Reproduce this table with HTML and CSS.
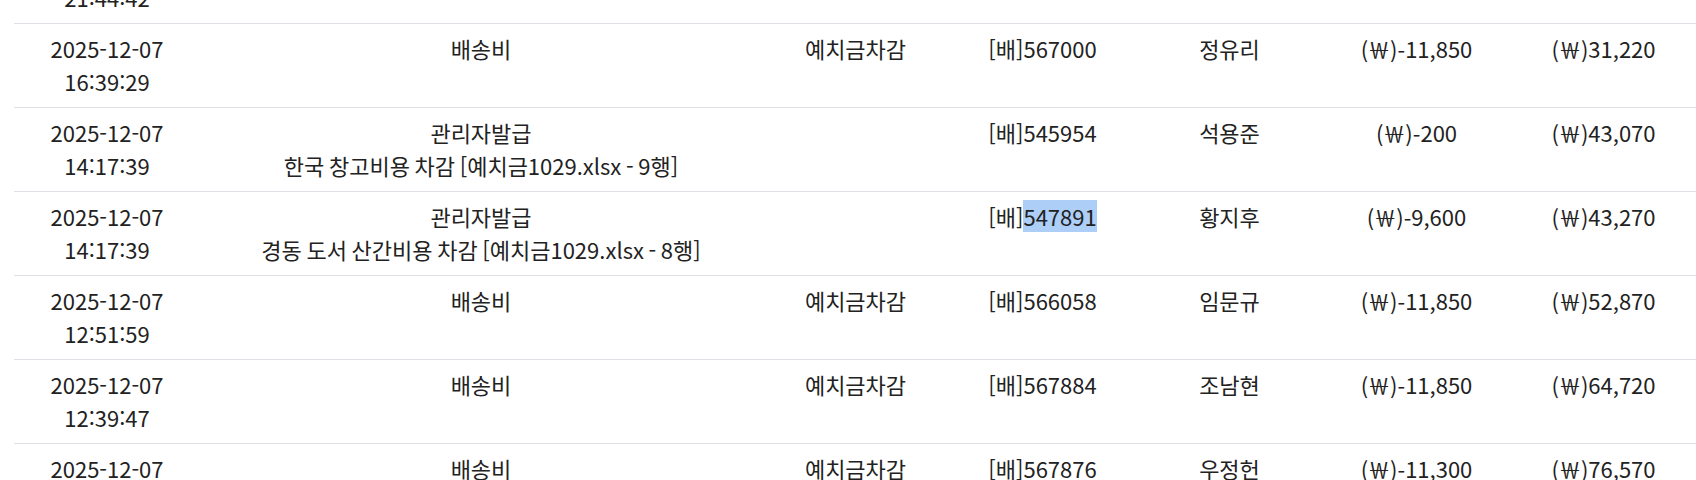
FILE: index.html
```html
<!DOCTYPE html>
<html lang="ko">
<head>
<meta charset="utf-8">
<link rel="stylesheet" href="styles.css">
</head>
<body>
<div class="scroller">
<table class="ledger">
  <colgroup>
    <col class="c-date"><col class="c-desc"><col class="c-type"><col class="c-order"><col class="c-name"><col class="c-amt"><col class="c-bal">
  </colgroup>
  <tbody>
    <tr><td>2025-12-07<br>21:44:42</td><td class="desc">배송비</td><td>예치금차감</td><td>[배]567001</td><td>김하늘</td><td>(￦)-11,850</td><td>(￦)19,370</td></tr>
    <tr><td>2025-12-07<br>16:39:29</td><td class="desc">배송비</td><td>예치금차감</td><td>[배]567000</td><td>정유리</td><td>(￦)-11,850</td><td>(￦)31,220</td></tr>
    <tr><td>2025-12-07<br>14:17:39</td><td class="desc">관리자발급<br>한국 창고비용 차감 [예치금1029.xlsx - 9행]</td><td></td><td>[배]545954</td><td>석용준</td><td>(￦)-200</td><td>(￦)43,070</td></tr>
    <tr><td>2025-12-07<br>14:17:39</td><td class="desc">관리자발급<br>경동 도서 산간비용 차감 [예치금1029.xlsx - 8행]</td><td></td><td>[배]<span class="sel">547891</span></td><td>황지후</td><td>(￦)-9,600</td><td>(￦)43,270</td></tr>
    <tr><td>2025-12-07<br>12:51:59</td><td class="desc">배송비</td><td>예치금차감</td><td>[배]566058</td><td>임문규</td><td>(￦)-11,850</td><td>(￦)52,870</td></tr>
    <tr><td>2025-12-07<br>12:39:47</td><td class="desc">배송비</td><td>예치금차감</td><td>[배]567884</td><td>조남현</td><td>(￦)-11,850</td><td>(￦)64,720</td></tr>
    <tr><td>2025-12-07<br>12:31:05</td><td class="desc">배송비</td><td>예치금차감</td><td>[배]567876</td><td>우정헌</td><td>(￦)-11,300</td><td>(￦)76,570</td></tr>
  </tbody>
</table>
</div>
</body>
</html>
```

FILE: styles.css
```css
html, body {
  margin: 0;
  padding: 0;
  background: #ffffff;
  overflow: hidden;
}
.scroller {
  padding-left: 14px;
  margin-top: -60px;
}
.ledger {
  width: 1682px;
  border-collapse: collapse;
  table-layout: fixed;
  font-family: "Noto Sans CJK KR", "Noto Sans", sans-serif;
  font-size: 22px;
  line-height: 33px;
  color: #222222;
}
.c-date { width: 186px; }
.c-desc { width: 562px; }
.c-type, .c-order, .c-name, .c-amt, .c-bal { width: 187px; }
.ledger td {
  text-align: center;
  vertical-align: top;
  padding: 8px 0 9px;
  border-bottom: 1px solid #dde1e6;
  white-space: nowrap;
}
.ledger td.desc {
  word-spacing: -1.5px;
}
.sel {
  background: #accef7;
}
```
